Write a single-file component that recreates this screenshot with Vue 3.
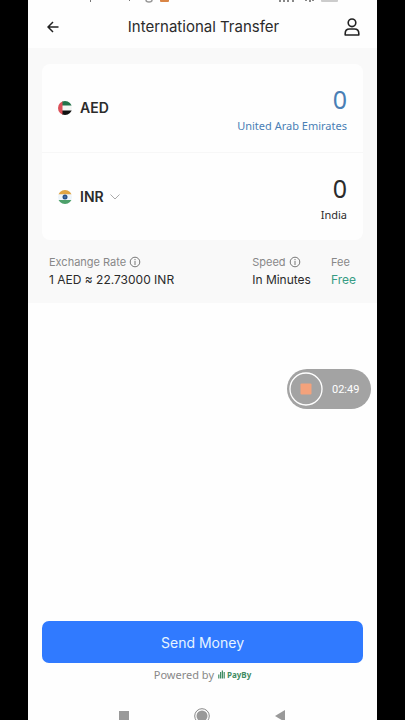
<script setup>
import { ref } from 'vue'

const sendAmount = ref('0')
const receiveAmount = ref('0')
</script>

<template>
  <div class="stage">
    <main class="phone">
      <div class="status" aria-hidden="true">
        <svg class="status-left" viewBox="0 0 84 4" width="84" height="4">
          <path d="M5.5 0v2M44.5 0v1" stroke="#777" fill="none" />
          <path d="M61 0q0 2 3 2t3-2" stroke="#999" stroke-width="1.5" fill="none" />
          <path d="M75 0h9v1q0 1-1 1h-7q-1 0-1-1z" fill="#d98545" />
        </svg>
        <svg class="status-right" viewBox="0 0 60 4" width="60" height="4">
          <path d="M1 0v2M5 0v2M9 0v2M14 0v2M27 0v1M31 0v2M34 0v1" stroke="#888" stroke-width="2" fill="none" />
          <path d="M42 0h17v1q0 1-1 1H43q-1 0-1-1z" fill="#ccc" />
        </svg>
      </div>

      <header class="bar">
        <button class="icon-button" type="button" aria-label="Back">
          <svg viewBox="0 0 12 12" width="12" height="12" fill="none" stroke="#222" stroke-width="1.5">
            <path d="M11.500 6H1.500M6 1L1 6l5 5" />
          </svg>
        </button>
        <h1>International Transfer</h1>
        <button class="icon-button" type="button" aria-label="Profile">
          <svg viewBox="0 0 16 18" width="16" height="18" fill="none" stroke="#222" stroke-width="1.600">
            <circle cx="8" cy="4.800" r="3.800" />
            <path d="M1.200 17v-1.500q0-4.500 4.300-4.500h5q4.300 0 4.300 4.500V17z" stroke-linejoin="round" />
          </svg>
        </button>
      </header>

      <section class="quote">
        <div class="card">
          <div class="row">
            <span class="currency">
              <svg viewBox="0 0 14 14" width="14" height="14" aria-hidden="true">
                <clipPath id="uae"><circle cx="7" cy="7" r="7" /></clipPath>
                <g clip-path="url(#uae)">
                  <path d="M0 0h14v14H0z" fill="#f4f6f4" />
                  <path d="M4 0h10v4.500H4z" fill="#23734a" />
                  <path d="M4 9.500h10V14H4z" fill="#111" />
                  <path d="M0 0h4.500v14H0z" fill="#dc5059" />
                </g>
              </svg>
              AED
            </span>
            <label class="amount sending">
              <input v-model="sendAmount" type="text" inputmode="decimal" />
              <span>United Arab Emirates</span>
            </label>
          </div>
          <div class="row">
            <button class="currency" type="button">
              <svg viewBox="0 0 14 14" width="14" height="14" aria-hidden="true">
                <clipPath id="india"><circle cx="7" cy="7" r="7" /></clipPath>
                <g clip-path="url(#india)">
                  <path d="M0 0h14v14H0z" fill="#eef5fa" />
                  <path d="M0 0h14v4.300H0z" fill="#e0a443" />
                  <path d="M0 10h14v4H0z" fill="#4da06a" />
                </g>
                <circle cx="7" cy="7" r="2.500" fill="#27518a" />
                <circle cx="7" cy="7" r="0.700" fill="#7d9abb" />
              </svg>
              INR
              <svg class="chevron" viewBox="0 0 10 6" width="10" height="6" fill="none" stroke="#aaa" aria-hidden="true">
                <path d="M0.500 0.500L5 5l4.500-4.500" />
              </svg>
            </button>
            <label class="amount">
              <input v-model="receiveAmount" type="text" inputmode="decimal" />
              <span>India</span>
            </label>
          </div>
        </div>

        <dl class="facts">
          <div class="rate">
            <dt>
              Exchange Rate
              <svg viewBox="0 0 12 12" width="12" height="12" fill="none" stroke="#777" aria-hidden="true">
                <circle cx="6" cy="6" r="4.800" />
                <path d="M6 3v1.200M6 5v4" />
              </svg>
            </dt>
            <dd>1 AED ≈ 22.73000 INR</dd>
          </div>
          <div>
            <dt>
              Speed
              <svg viewBox="0 0 12 12" width="12" height="12" fill="none" stroke="#777" aria-hidden="true">
                <circle cx="6" cy="6" r="4.800" />
                <path d="M6 3v1.200M6 5v4" />
              </svg>
            </dt>
            <dd>In Minutes</dd>
          </div>
          <div>
            <dt>Fee</dt>
            <dd class="free">Free</dd>
          </div>
        </dl>
      </section>

      <button class="recorder" type="button" aria-label="Stop recording, 02:49">
        <svg viewBox="0 0 34 34" width="34" height="34" aria-hidden="true">
          <circle cx="17" cy="17" r="16" fill="none" stroke="#fff" stroke-width="1.300" />
          <rect x="11.500" y="11.500" width="11" height="11" rx="1" fill="#f3a27c" />
        </svg>
        <span>02:49</span>
      </button>

      <footer class="actions">
        <button class="send" type="button">Send Money</button>
        <p>
          Powered by
          <span class="brand">
            <svg viewBox="0 0 7 10" width="7" height="10" fill="none" stroke="#3f8c62" stroke-width="1.200" aria-hidden="true">
              <path d="M0.800 4.500v4M2.600 2v6.500M4.400 0.500v8M6.200 2v6.500" />
            </svg>
            PayBy
          </span>
        </p>
      </footer>

      <nav class="system" aria-label="System navigation">
        <button type="button" aria-label="Recent apps">
          <svg viewBox="0 0 16 16" width="16" height="16"><path d="M3 3h10v10H3z" fill="#999" /></svg>
        </button>
        <button type="button" aria-label="Home">
          <svg viewBox="0 0 16 16" width="16" height="16">
            <circle cx="8" cy="8" r="7.300" fill="none" stroke="#888" />
            <circle cx="8" cy="8" r="5.500" fill="#999" />
          </svg>
        </button>
        <button type="button" aria-label="Back">
          <svg viewBox="0 0 16 16" width="16" height="16"><path d="M3 8l10-6v12z" fill="#999" /></svg>
        </button>
      </nav>
    </main>
  </div>
</template>

<style>
body {
  margin: 0;
  background: #000;
}
</style>

<style scoped>
* {
  box-sizing: border-box;
}

.stage {
  height: 100vh;
  padding: 0 28px;
  overflow: hidden;
  background: #000;
  font-family: Inter, "Noto Sans", sans-serif;
  color: #2b2b2b;
}

button {
  padding: 0;
  border: 0;
  background: none;
  font: inherit;
  color: inherit;
}

svg {
  display: block;
  flex: none;
}

.phone {
  position: relative;
  display: flex;
  flex-direction: column;
  height: 100%;
  background: #fefefe;
}

.status {
  display: flex;
  justify-content: space-between;
  height: 6px;
  padding: 0 38px 0 57px;
}

.bar {
  display: grid;
  grid-template-columns: 16px 1fr 16px;
  align-items: center;
  height: 42px;
  padding: 0 17px 0 19px;
}

.icon-button {
  display: flex;
}

h1 {
  margin: 0;
  font-size: 15px;
  line-height: 20px;
  font-weight: 400;
  text-align: center;
}

.quote {
  padding: 16px 14px 13px;
  background: #f9f9f9;
}

.card {
  border-radius: 8px;
  background: #fefefe;
}

.row {
  display: flex;
  align-items: center;
  justify-content: space-between;
  height: 88px;
  padding: 0 16px;
}

.row + .row {
  border-top: 1px solid #f7f7f7;
}

.currency {
  display: flex;
  align-items: center;
  gap: 8px;
  font-size: 14px;
  line-height: 20px;
  font-weight: 600;
}

.chevron {
  margin-left: -2px;
}

.amount {
  display: flex;
  flex-direction: column;
  align-items: flex-end;
  gap: 4px;
  padding-top: 2px;
  font-family: "Noto Sans", sans-serif;
  font-size: 11px;
  line-height: 16px;
}

.amount input {
  width: 120px;
  height: 30px;
  padding: 0;
  border: 0;
  outline: 0;
  background: none;
  font-family: "Noto Sans", sans-serif;
  font-size: 25px;
  font-weight: 400;
  text-align: right;
  color: inherit;
}

.sending {
  color: #4a7fb5;
}

.facts {
  display: flex;
  gap: 20px;
  margin: 14px 0 0;
  padding: 0 7px;
}

.rate {
  flex: 1;
}

dt {
  display: flex;
  align-items: center;
  gap: 3px;
  font-size: 11px;
  line-height: 16px;
  color: #888;
}

dd {
  margin: 0;
  font-size: 12px;
  line-height: 20px;
}

.free {
  color: #369c84;
}

.recorder {
  position: absolute;
  top: 369px;
  right: 6px;
  display: flex;
  align-items: center;
  gap: 9px;
  width: 84px;
  height: 40px;
  padding: 0 2px;
  border-radius: 20px;
  background: #a3a3a3;
  font-family: Roboto, sans-serif;
  font-size: 11px;
  color: #fff;
}

.actions {
  margin-top: auto;
  padding: 0 14px;
}

.send {
  width: 100%;
  height: 42px;
  border-radius: 7px;
  background: #307aff;
  font-size: 14px;
  color: #e6f4ff;
}

.actions p {
  display: flex;
  align-items: center;
  justify-content: center;
  gap: 4px;
  margin: 4px 0 0;
  font-family: "Noto Sans", sans-serif;
  font-size: 11px;
  line-height: 16px;
  color: #888;
}

.brand {
  display: flex;
  align-items: center;
  gap: 2px;
  font-size: 8px;
  font-weight: 700;
  color: #3f8c62;
}

.system {
  display: flex;
  justify-content: space-between;
  height: 37px;
  padding: 25px 89px 0 88px;
}
</style>
